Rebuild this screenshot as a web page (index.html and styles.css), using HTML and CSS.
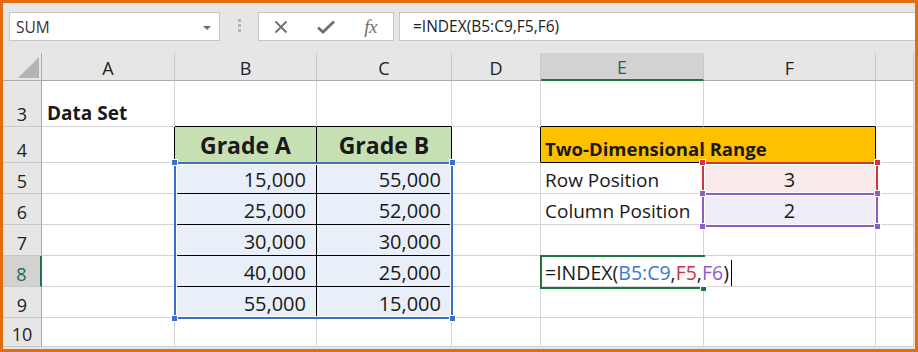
FILE: index.html
```html
<!DOCTYPE html>
<html lang="en">
<head>
    <meta charset="UTF-8">
    <meta name="viewport" content="width=device-width, initial-scale=1.0">
    <title>INDEX with a two-dimensional range</title>
    <link rel="stylesheet" href="styles.css">
</head>
<body>
  <div class="frame">
    <div class="toolbar">
      <div class="name-box">
        <span>SUM</span>
        <span class="drop"></span>
      </div>
      <div class="grip"><i></i><i></i><i></i></div>
      <div class="buttons">
        <span class="btn">
          <svg width="14" height="14" viewBox="0 0 14 14"><path d="M1.5 1.5 L12.5 12.5 M12.5 1.5 L1.5 12.5" stroke="#6f6f6f" stroke-width="1.8" fill="none"/></svg>
        </span>
        <span class="btn">
          <svg width="18" height="14" viewBox="0 0 18 14"><path d="M1 7.5 L6 12 L17 1.5" stroke="#6f6f6f" stroke-width="2.8" fill="none" stroke-linejoin="miter"/></svg>
        </span>
        <span class="btn fx">fx</span>
      </div>
      <div class="formula-bar">=INDEX(B5:C9,F5,F6)</div>
    </div>

    <div class="sheet">
      <!-- column headers -->
      <div class="cell head corner">
        <svg width="21" height="21" viewBox="0 0 21 21"><path d="M21 0 L21 21 L0 21 Z" fill="#b4b4b4"/></svg>
      </div>
      <div class="cell head">A</div>
      <div class="cell head">B</div>
      <div class="cell head">C</div>
      <div class="cell head">D</div>
      <div class="cell head active">E</div>
      <div class="cell head">F</div>
      <div class="cell head"></div>

      <!-- row 3 -->
      <div class="cell rowhead">3</div>
      <div class="cell bold">Data Set</div>
      <div class="cell edge-b"></div>
      <div class="cell edge-b"></div>
      <div class="cell"></div>
      <div class="cell edge-b"></div>
      <div class="cell edge-b"></div>
      <div class="cell"></div>

      <!-- row 4 -->
      <div class="cell rowhead">4</div>
      <div class="cell edge-r"></div>
      <div class="cell title">Grade A</div>
      <div class="cell title">Grade B</div>
      <div class="cell edge-r"></div>
      <div class="cell band">Two-Dimensional Range</div>
      <div class="cell"></div>

      <!-- row 5 -->
      <div class="cell rowhead">5</div>
      <div class="cell edge-r"></div>
      <div class="cell num data">15,000</div>
      <div class="cell num data">55,000</div>
      <div class="cell"></div>
      <div class="cell">Row Position</div>
      <div class="cell mid pink">3</div>
      <div class="cell"></div>

      <!-- row 6 -->
      <div class="cell rowhead">6</div>
      <div class="cell edge-r"></div>
      <div class="cell num data">25,000</div>
      <div class="cell num data">52,000</div>
      <div class="cell"></div>
      <div class="cell">Column Position</div>
      <div class="cell mid lilac">2</div>
      <div class="cell"></div>

      <!-- row 7 -->
      <div class="cell rowhead">7</div>
      <div class="cell edge-r"></div>
      <div class="cell num data">30,000</div>
      <div class="cell num data">30,000</div>
      <div class="cell"></div>
      <div class="cell"></div>
      <div class="cell"></div>
      <div class="cell"></div>

      <!-- row 8 -->
      <div class="cell rowhead active">8</div>
      <div class="cell edge-r"></div>
      <div class="cell num data">40,000</div>
      <div class="cell num data">25,000</div>
      <div class="cell"></div>
      <div class="cell editing">=INDEX(<span class="ref-blue">B5:C9</span>,<span class="ref-red">F5</span>,<span class="ref-purple">F6</span>)<span class="caret"></span></div>
      <div class="cell"></div>
      <div class="cell"></div>

      <!-- row 9 -->
      <div class="cell rowhead">9</div>
      <div class="cell edge-r"></div>
      <div class="cell num data">55,000</div>
      <div class="cell num data">15,000</div>
      <div class="cell"></div>
      <div class="cell"></div>
      <div class="cell"></div>
      <div class="cell"></div>

      <!-- row 10 -->
      <div class="cell rowhead">10</div>
      <div class="cell"></div>
      <div class="cell"></div>
      <div class="cell"></div>
      <div class="cell"></div>
      <div class="cell"></div>
      <div class="cell"></div>
      <div class="cell"></div>

      <!-- reference highlights over the grid -->
      <div class="range range-blue">
        <span class="knob tl"></span><span class="knob tr"></span>
        <span class="knob bl"></span><span class="knob br"></span>
      </div>
      <div class="range range-red">
        <span class="knob tl"></span><span class="knob tr"></span>
      </div>
      <div class="range range-purple">
        <span class="knob tl"></span><span class="knob tr"></span>
        <span class="knob bl"></span><span class="knob br"></span>
      </div>
      <div class="active-cell"><span class="fill-handle"></span></div>
    </div>
  </div>
</body>
</html>
```

FILE: styles.css
```css
body {
    margin: 0;
    font-family: "Open Sans", "Noto Sans", sans-serif;
    color: #1a1a1a;
}

.frame {
    box-sizing: border-box;
    width: 918px;
    height: 352px;
    border: 3px solid #e46c0a;
    background: #e6e6e6;
    display: flex;
    flex-direction: column;
    overflow: hidden;
}

/* formula bar row */
.toolbar {
    height: 50px;
    box-sizing: border-box;
    padding: 9px 0 0 6px;
    display: flex;
    align-items: flex-start;
}

.name-box,
.buttons,
.formula-bar {
    box-sizing: border-box;
    height: 29px;
    background: #fff;
    border: 1px solid #c6c6c6;
}

.name-box {
    width: 211px;
    display: flex;
    align-items: center;
    justify-content: space-between;
    padding: 0 8px 0 6px;
    font-size: 15.5px;
    color: #333;
}

.drop {
    width: 0;
    height: 0;
    border-left: 4px solid transparent;
    border-right: 4px solid transparent;
    border-top: 4px solid #6d6d6d;
    margin-top: 2px;
}

.grip {
    width: 38px;
    display: flex;
    flex-direction: column;
    align-items: center;
    gap: 2px;
    padding-top: 7px;
}

.grip i {
    display: block;
    width: 3px;
    height: 3px;
    background: #b4b4b4;
}

.buttons {
    width: 136px;
    display: flex;
    align-items: center;
}

.btn {
    flex: 1;
    display: flex;
    justify-content: center;
    align-items: center;
}

.fx {
    font-family: "Liberation Serif", serif;
    font-style: italic;
    font-size: 19px;
    color: #6f6f6f;
    letter-spacing: -0.5px;
}

.formula-bar {
    flex: 1;
    margin-left: 5px;
    border-right: none;
    padding-left: 13px;
    font-size: 15.5px;
    line-height: 27px;
    color: #222;
}

/* the grid */
.sheet {
    position: relative;
    flex: 1;
    display: grid;
    grid-template-columns: 39px 133px 142px 135px 89px 163px 172px 38px;
    grid-template-rows: 28px 46px 36px 31px 31px 31px 31px 31px 29px;
}

.cell {
    box-sizing: border-box;
    border-right: 1px solid #d4d4d4;
    border-bottom: 1px solid #d4d4d4;
    background: #fff;
    display: flex;
    align-items: flex-end;
    padding: 0 4px;
    font-size: 19px;
    white-space: nowrap;
}

.head {
    background: #e6e6e6;
    border-right-color: #c8c8c8;
    border-bottom-color: #ababab;
    justify-content: center;
    font-size: 18px;
    color: #222;
}

.corner {
    border-right-color: #ababab;
    justify-content: flex-end;
    padding: 0 2px 2px 0;
}

.rowhead {
    background: #e6e6e6;
    border-right-color: #ababab;
    border-bottom-color: #c8c8c8;
    justify-content: center;
    font-size: 18px;
    color: #222;
}

.head.active {
    background: #d2d2d2;
    color: #1e6b41;
    border-bottom: 2px solid #217346;
}

.rowhead.active {
    background: #d2d2d2;
    color: #1e6b41;
    border-right: 2px solid #217346;
}

.bold {
    font-weight: 700;
    padding-left: 5px;
}

.edge-b {
    border-bottom-color: #000;
}

.edge-r {
    border-right-color: #000;
}

.title {
    background: #c6e0b4;
    border-right-color: #000;
    border-bottom-color: #000;
    justify-content: center;
    font-weight: 700;
    font-size: 23px;
    padding-bottom: 1px;
}

.band {
    grid-column: span 2;
    background: #ffc000;
    border-right-color: #000;
    border-bottom-color: #000;
    font-weight: 700;
    font-size: 18.5px;
    padding-bottom: 1px;
}

.num {
    justify-content: flex-end;
    padding-right: 10px;
    font-size: 20px;
}

.data {
    background: #e9eff8;
    border-right-color: #000;
    border-bottom-color: #000;
}

.mid {
    justify-content: center;
    font-size: 20px;
}

.pink {
    background: #f9eaea;
}

.lilac {
    background: #f0edf7;
}

/* the cell being edited spills its text over F8 */
.editing {
    position: relative;
    z-index: 1;
    font-size: 19.5px;
    border-right-color: #fff;
}

.ref-blue {
    color: #3b78d6;
}

.ref-red {
    color: #d2323c;
}

.ref-purple {
    color: #8e5dc6;
}

.caret {
    display: inline-block;
    width: 0;
    height: 26px;
    border-left: 1px solid #000;
    margin-left: 2px;
    vertical-align: -6px;
}

/* coloured reference boxes */
.range {
    position: absolute;
    box-sizing: border-box;
    border: 2px solid;
    box-shadow: inset 0 0 0 1px #fff;
}

.range-blue {
    left: 171px;
    top: 109px;
    width: 279px;
    height: 157px;
    border-color: #3c6fc9;
    color: #3c6fc9;
}

.range-red {
    left: 699px;
    top: 109px;
    width: 176px;
    height: 33px;
    border-color: #c9383e;
    color: #c9383e;
}

.range-purple {
    left: 699px;
    top: 140px;
    width: 176px;
    height: 34px;
    border-color: #8e5dbf;
    color: #8e5dbf;
}

.knob {
    position: absolute;
    width: 5px;
    height: 5px;
    background: currentColor;
    border: 1px solid #fff;
}

.knob.tl { left: -5px; top: -5px; }
.knob.tr { right: -5px; top: -5px; }
.knob.bl { left: -5px; bottom: -5px; }
.knob.br { right: -5px; bottom: -5px; }

.active-cell {
    position: absolute;
    z-index: 2;
    left: 537px;
    top: 202px;
    width: 165px;
    height: 34px;
    box-sizing: border-box;
    border: 2px solid #217346;
    border-right: none;
}

.fill-handle {
    position: absolute;
    left: 158px;
    top: 29px;
    width: 5px;
    height: 4px;
    background: #217346;
    border-left: 1px solid #fff;
    border-top: 1px solid #fff;
}
```
